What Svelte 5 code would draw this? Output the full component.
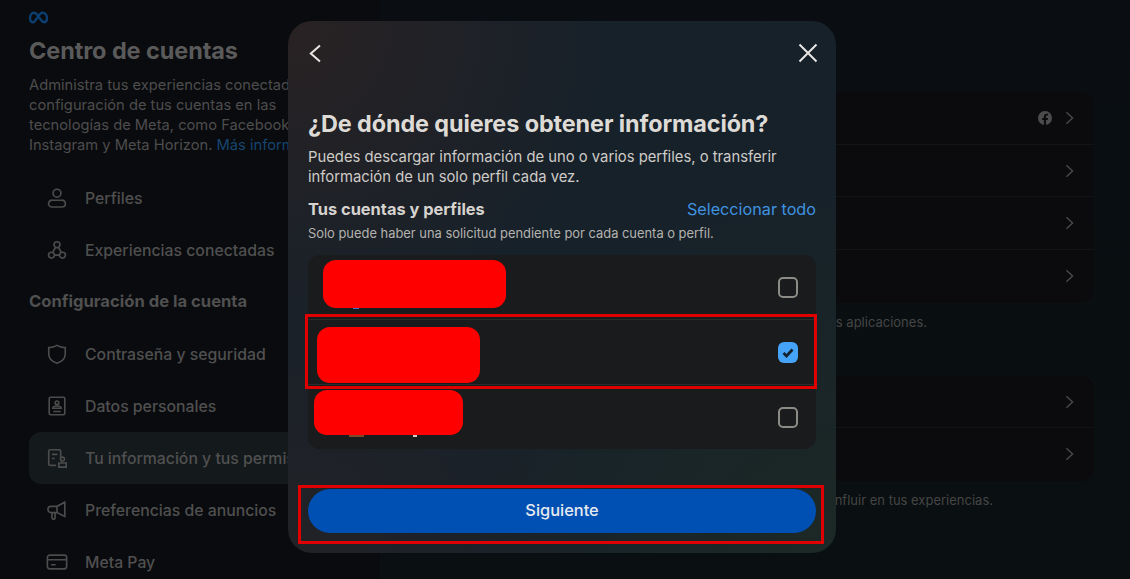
<script>
  // Sidebar entries, the icon key picks the svg path below
  const profileItems = [
    { label: "Perfiles", icon: "user" },
    { label: "Experiencias conectadas", icon: "nodes" }
  ];
  const settingItems = [
    { label: "Contraseña y seguridad", icon: "shield" },
    { label: "Datos personales", icon: "card" },
    { label: "Tu información y tus permisos", icon: "doc", active: true },
    { label: "Preferencias de anuncios", icon: "horn" },
    { label: "Meta Pay", icon: "pay" }
  ];
  const icons = {
    user: "M12 2.500a4.300 4.300 0 1 1 0 8.600a4.300 4.300 0 0 1 0-8.600zM7 14.400h10a4.200 4.200 0 0 1 4.200 3.800c0 2-1.600 3.600-3.800 3.600H6.600c-2.200 0-3.800-1.600-3.800-3.600A4.200 4.200 0 0 1 7 14.400z",
    nodes: "M12 3a3.200 3.200 0 1 1 0 6.400a3.200 3.200 0 0 1 0-6.400zM6 14.400a3.200 3.200 0 1 1 0 6.400a3.200 3.200 0 0 1 0-6.400zM18 14.400a3.200 3.200 0 1 1 0 6.400a3.200 3.200 0 0 1 0-6.400zM10.400 9l-3 5.600M13.600 9l3 5.600M9.200 17.600h5.600",
    shield: "M12 2.600c3 1.900 5.800 2.400 9 2.400v7c0 5-4 8.400-9 10c-5-1.600-9-5-9-10V5c3.200 0 6-.5 9-2.400z",
    card: "M5 2.500h14a1.500 1.500 0 0 1 1.500 1.500v16a1.500 1.500 0 0 1-1.500 1.500H5A1.500 1.500 0 0 1 3.500 20V4A1.500 1.500 0 0 1 5 2.500zM12 6.500a2 2 0 1 1 0 4a2 2 0 0 1 0-4zM7.500 14.500c0-2 2-2.500 4.500-2.500s4.500.5 4.500 2.500zM8 18h8",
    doc: "M16 12V4.500A1.500 1.500 0 0 0 14.500 3H4.500A1.500 1.500 0 0 0 3 4.500v14A1.500 1.500 0 0 0 4.500 20H11M6.500 8h6M6.500 12.500h3M14 17.500h8v4.500h-8zM18 11a2.200 2.200 0 1 1 0 4.400a2.200 2.200 0 0 1 0-4.400z",
    horn: "M20.500 3.500v15.500L12 14.800H5.500a3.300 3.300 0 0 1 0-6.800H12zM12 8v6.800M6.500 15v5.500a1.700 1.700 0 0 0 3.400 0V15",
    pay: "M4 4.500h16a2.500 2.500 0 0 1 2.500 2.500v10a2.500 2.500 0 0 1-2.500 2.500H4A2.500 2.500 0 0 1 1.500 17V7A2.500 2.500 0 0 1 4 4.500zM1.500 9.500h21M5.500 15h5"
  };
  const firstCard = [{ fb: true }, {}, {}, {}];
  const secondCard = [{}, {}];
  const accounts = [
    { checked: false },
    { checked: true },
    { checked: false }
  ];
</script>

{#snippet navItem(item)}
  <div class="nav-item" class:active={item.active}>
    <svg class="nav-icon" viewBox="0 0 24 24"><path d={icons[item.icon]} /></svg>
    <span>{item.label}</span>
  </div>
{/snippet}

{#snippet chevronRows(rows)}
  <div class="card">
    {#each rows as row}
      <div class="card-row">
        {#if row.fb}
          <svg class="fb" viewBox="0 0 24 24">
            <circle cx="12" cy="12" r="12" fill="#4c4c4c" />
            <path d="M16.600 15.500l.5-3.500h-3.300V9.800c0-1 .5-1.900 2-1.900h1.500v-3s-1.400-.2-2.700-.2c-2.700 0-4.500 1.600-4.500 4.600V12H7.100v3.500h3v8.400a12 12 0 0 0 3.700 0v-8.400z" fill="#0b0c0e" />
          </svg>
        {/if}
        <svg class="chev" viewBox="0 0 10 16"><path d="M1.500 1.500L8.500 8L1.500 14.500" /></svg>
      </div>
    {/each}
  </div>
{/snippet}

<div class="page">
  <aside class="sidebar">
    <svg class="meta" viewBox="0 0 36 24">
      <path d="M9.500 3C4.800 3 2 8 2 13c0 4.500 2 8 5.500 8c6 0 10-18 18-18C30.500 3 34 7.500 34 13.500c0 4.500-2 7.500-5 7.500C21.500 21 17 3 9.500 3z" />
    </svg>
    <h1>Centro de cuentas</h1>
    <p class="intro">
      Administra tus experiencias conectadas y la<br />
      configuración de tus cuentas en las<br />
      tecnologías de Meta, como Facebook,<br />
      Instagram y Meta Horizon. <a href="#more">Más información</a>
    </p>
    <nav>
      {#each profileItems as item}{@render navItem(item)}{/each}
    </nav>
    <h2>Configuración de la cuenta</h2>
    <nav>
      {#each settingItems as item}{@render navItem(item)}{/each}
    </nav>
  </aside>

  <main class="content">
    {@render chevronRows(firstCard)}
    <p class="caption first">Administra tus datos en todas las aplicaciones.</p>
    {@render chevronRows(secondCard)}
    <p class="caption second">Decide qué información puede influir en tus experiencias.</p>
  </main>

  <section class="modal">
    <header class="modal-top">
      <svg class="top-icon back" viewBox="0 0 24 24"><path d="M11 4.500L1.800 12.500L11 20.500" /></svg>
      <svg class="top-icon close" viewBox="0 0 24 24"><path d="M3.500 3.500L20.500 20.500M20.500 3.500L3.500 20.500" /></svg>
    </header>
    <h3>¿De dónde quieres obtener información?</h3>
    <p class="lead">Puedes descargar información de uno o varios perfiles, o transferir información de un solo perfil cada vez.</p>
    <div class="list-head">
      <strong>Tus cuentas y perfiles</strong>
      <a href="#all">Seleccionar todo</a>
    </div>
    <p class="note">Solo puede haber una solicitud pendiente por cada cuenta o perfil.</p>

    <div class="accounts">
      {#each accounts as account}
        <div class="account">
          <span class="check" class:checked={account.checked}>
            {#if account.checked}
              <svg viewBox="0 0 20 20"><path d="M5.500 10.500L8.500 13.500L14.500 7" /></svg>
            {/if}
          </span>
        </div>
      {/each}
    </div>

    <button class="next">Siguiente</button>

    <!-- bits of the row avatars that stick out under the paint -->
    <div class="peek peek-blue"></div>
    <div class="peek peek-orange"></div>
    <div class="peek peek-white"></div>

    <!-- red marks someone painted over the screenshot -->
    <div class="blob blob-a"></div>
    <div class="blob blob-b"></div>
    <div class="blob blob-c"></div>
    <div class="mark mark-row"></div>
    <div class="mark mark-btn"></div>
  </section>
</div>

<style>
  :global(body) {
    margin: 0;
    background: #0a0d10;
  }
  .page {
    position: relative;
    display: grid;
    grid-template-columns: 380px 1fr;
    width: 1130px;
    height: 579px;
    overflow: hidden;
    font-family: Inter, "Liberation Sans", sans-serif;
    background: linear-gradient(180deg, #0a0e12 0%, #0a0f11 100%);
  }
  .sidebar {
    box-sizing: border-box;
    height: 579px;
    padding: 11px 0 0 29px;
    background: #0a0b0e;
    overflow: hidden;
  }
  .meta {
    display: block;
    width: 19px;
    height: 13px;
  }
  .meta path {
    fill: none;
    stroke: #0a3f70;
    stroke-width: 4.500;
  }
  h1 {
    margin: 13px 0 0;
    font-size: 23.500px;
    line-height: 28px;
    font-weight: 700;
    color: #5a5a5a;
    letter-spacing: -0.1px;
    white-space: nowrap;
  }
  .intro {
    margin: 10px 0 0;
    font-size: 14.700px;
    line-height: 20px;
    color: #4d4d4d;
    white-space: nowrap;
  }
  .intro a {
    color: #16466f;
    text-decoration: none;
  }
  nav {
    width: 351px;
  }
  .sidebar > nav:first-of-type {
    margin-top: 17px;
  }
  .nav-item {
    display: flex;
    align-items: center;
    gap: 17px;
    height: 52px;
    padding-left: 17px;
    border-radius: 12px;
    font-size: 15.800px;
    font-weight: 500;
    color: #505050;
    white-space: nowrap;
  }
  .nav-item.active {
    background: #14191c;
  }
  .nav-icon {
    width: 22px;
    height: 22px;
    flex: none;
  }
  .nav-icon path {
    fill: none;
    stroke: #4c4c4c;
    stroke-width: 1.800;
  }
  h2 {
    margin: 14px 0 16px;
    font-size: 16.600px;
    line-height: 22px;
    font-weight: 700;
    color: #505050;
    white-space: nowrap;
  }
  .content {
    padding: 92px 36px 0 60px;
  }
  .card {
    border-radius: 14px;
    background: #0b0b0d;
  }
  .card-row {
    box-sizing: border-box;
    display: flex;
    align-items: center;
    justify-content: flex-end;
    gap: 13px;
    height: 52.700px;
    padding-right: 20px;
    border-bottom: 1px solid #131416;
  }
  .card-row:last-child {
    border-bottom-color: transparent;
  }
  .fb {
    width: 14px;
    height: 14px;
  }
  .chev {
    width: 9px;
    height: 14px;
  }
  .chev path {
    fill: none;
    stroke: #4a4a4a;
    stroke-width: 1.600;
  }
  .caption {
    font-size: 13px;
    line-height: 16px;
    color: #454545;
    white-space: nowrap;
    text-align: right;
  }
  .caption.first {
    margin: 11px 0 46px;
    padding-right: 167px;
  }
  .caption.second {
    margin: 11px 0 0;
    padding-right: 101px;
  }
  .modal {
    position: absolute;
    left: 288px;
    top: 21px;
    box-sizing: border-box;
    width: 548px;
    height: 532px;
    padding: 20px;
    border-radius: 24px;
    color: #e4e2df;
    background:
      radial-gradient(circle at 0% 0%, #292223 0%, rgba(41, 34, 35, 0) 42%),
      radial-gradient(circle at 0% 100%, #222226 0%, rgba(34, 34, 38, 0) 40%),
      radial-gradient(circle at 100% 100%, #1c2925 0%, rgba(28, 41, 37, 0) 50%),
      #17212a;
  }
  .modal-top {
    display: flex;
    justify-content: space-between;
    height: 24px;
    margin-bottom: 44px;
  }
  .top-icon {
    width: 24px;
    height: 24px;
  }
  .top-icon.back {
    margin-left: 1px;
  }
  .top-icon.close {
    margin-right: -4px;
  }
  .top-icon path {
    fill: none;
    stroke: #e8e6e3;
    stroke-width: 2;
  }
  h3 {
    margin: 0;
    font-size: 23.400px;
    line-height: 30px;
    font-weight: 700;
    color: #dedbd7;
    letter-spacing: -0.1px;
    white-space: nowrap;
  }
  .lead {
    margin: 8px 0 0;
    font-size: 14.800px;
    line-height: 20px;
    color: #cfccc8;
  }
  .list-head {
    display: flex;
    justify-content: space-between;
    align-items: center;
    margin-top: 11px;
    height: 22px;
  }
  .list-head strong {
    font-size: 16.400px;
    font-weight: 700;
    color: #d6d3cf;
  }
  .list-head a {
    font-size: 16.200px;
    font-weight: 400;
    color: #3f93e0;
    text-decoration: none;
  }
  .note {
    margin: 5px 0 0;
    font-size: 12.900px;
    line-height: 17px;
    color: #b4b2ae;
  }
  .accounts {
    margin-top: 13px;
    border-radius: 12px;
    background: #1a1b1d;
  }
  .account {
    box-sizing: border-box;
    display: flex;
    align-items: center;
    justify-content: flex-end;
    height: 65px;
    padding-right: 18px;
    border-bottom: 1px solid #2b2c2e;
  }
  .account:last-child {
    height: 64px;
    border-bottom: 0;
  }
  .check {
    box-sizing: border-box;
    display: block;
    width: 20px;
    height: 21px;
    border: 2px solid #8c8b86;
    border-radius: 5px;
  }
  .check.checked {
    border: 0;
    border-radius: 6px;
    background: #46a4f8;
  }
  .check svg {
    display: block;
    width: 20px;
    height: 21px;
  }
  .check path {
    fill: none;
    stroke: #14202c;
    stroke-width: 2.700;
  }
  .next {
    display: block;
    width: 100%;
    height: 44px;
    margin-top: 40px;
    padding: 0 0 2px;
    border: 0;
    border-radius: 22px;
    background: #0050b3;
    color: #e6eaf0;
    font: 500 16.400px Inter, "Liberation Sans", sans-serif;
  }
  .peek {
    position: absolute;
  }
  .peek-blue {
    left: 65px;
    top: 286px;
    width: 6px;
    height: 2px;
    background: #3f6fd0;
  }
  .peek-orange {
    left: 61px;
    top: 414px;
    width: 15px;
    height: 2px;
    background: #7a4a2a;
  }
  .peek-white {
    left: 125px;
    top: 414px;
    width: 4px;
    height: 2px;
    background: #d8c8c0;
  }
  .blob {
    position: absolute;
    background: #ff0000;
    border-radius: 13px;
  }
  .blob-a {
    left: 35px;
    top: 239px;
    width: 183px;
    height: 48px;
  }
  .blob-b {
    left: 29px;
    top: 306px;
    width: 163px;
    height: 56px;
  }
  .blob-c {
    left: 26px;
    top: 369px;
    width: 149px;
    height: 45px;
  }
  .mark {
    position: absolute;
    box-sizing: border-box;
    border: 3px solid #e00000;
  }
  .mark-row {
    left: 17px;
    top: 293px;
    width: 512px;
    height: 75px;
  }
  .mark-btn {
    left: 10px;
    top: 464px;
    width: 526px;
    height: 59px;
  }
</style>
